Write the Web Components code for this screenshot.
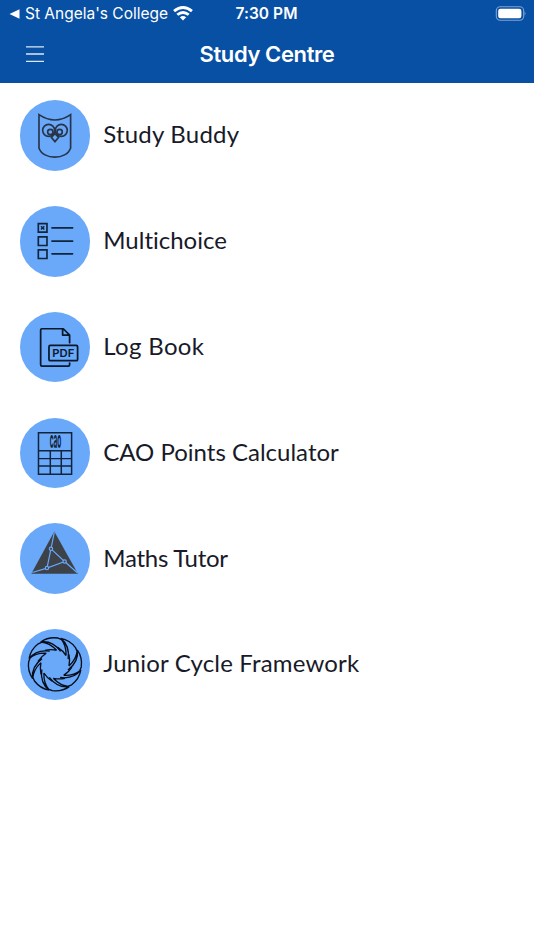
<!DOCTYPE html>
<html lang="en">
<head>
<meta charset="utf-8">
<title>Study Centre</title>
<style>
body{margin:0;background:#fff;font-family:Inter,"Liberation Sans",sans-serif}
</style>
</head>
<body>
<study-app></study-app>
<script>
const define=(name,html,ready)=>customElements.define(name,class extends HTMLElement{
  connectedCallback(){
    if(this.shadowRoot)return;
    const t=document.createElement('template');
    t.innerHTML=html;
    this.attachShadow({mode:'open'}).append(t.content.cloneNode(true));
    if(ready)ready(this,this.shadowRoot);
  }
});

const owl=`<g stroke="#28344a" stroke-width="5"><path d="M72 60Q120 92 167 60V160C155 197 84 197 72 160Z"/><circle cx="101" cy="107" r="18"/><circle cx="139" cy="107" r="18"/><circle cx="106" cy="112" r="8"/><circle cx="134" cy="112" r="8"/><path d="M109 128L120 117L131 128L120 141Z"/></g>`;
const list=`<g stroke="#10243c" stroke-width="5"><path d="M70 68H96V94H70ZM70 108H96V134H70ZM70 147H96V173H70ZM111 81H173M111 121H173M111 159H173" stroke-linecap="round"/><path d="M78 76L88 86M88 76L78 86" stroke-width="4.5"/></g>`;
const pdf=`<g stroke="#07182b" stroke-width="5.2" stroke-linecap="round" stroke-linejoin="round"><path d="M164 107V84L145 65H81Q77 65 77 69V173Q77 177 81 177H160Q164 177 164 173V168M143 67V84H162"/><rect x="102" y="115" width="86" height="46" rx="4"/></g><text x="145" y="150" text-anchor="middle" font-family="Inter" font-weight="600" font-size="32" textLength="66" lengthAdjust="spacingAndGlyphs" fill="#07182b">PDF</text>`;
const cao=`<path d="M70.5 58H170V183H70.5ZM70.5 112H170M70.5 136H170M70.5 158H170M106 112V183M139 112V183" stroke="#10243c" stroke-width="4.5"/><text transform="translate(121.5 104) scale(.5 1)" text-anchor="middle" font-family="Inter" font-weight="700" font-size="70" textLength="70" lengthAdjust="spacingAndGlyphs" fill="#10243c">cao</text>`;
const maths=`<path d="M118 39L189 166H49Z" fill="#3c4248"/><g stroke="#6aa8fa" stroke-width="3.5"><path d="M118 42L108 91L149 129L96 149L108 91M149 129L187 163M96 149L52 162"/><g fill="#3c4248"><circle cx="108" cy="91" r="5"/><circle cx="149" cy="129" r="5"/><circle cx="96" cy="149" r="5"/></g></g>`;
const blade=`<path d="M77 52Q100 36 128 40L138 44M77 52Q104 54 125 77M77 52Q112 47 137 80M125 77Q108 73 90 77"/>`;
const shutter=`<g stroke="#050d18" stroke-width="4" stroke-linejoin="round">${[0,45,90,135,180,225,270,315].map(a=>`<g transform="rotate(${a} 120 119)">${blade}</g>`).join('')}</g>`;
const glyphs={owl:[16,owl],list:[15.3,list],pdf:[14.7,pdf],cao:[14,cao],maths:[13.5,maths],shutter:[13,shutter]};

define('round-icon',`<style>:host{display:block;width:70.6px;height:70.6px;border-radius:50%;background:#6aa8fa;flex:none}svg{display:block;width:100%;height:100%}</style><div></div>`,(h,r)=>{
  const [y,g]=glyphs[h.getAttribute('name')];
  r.querySelector('div').innerHTML=`<svg viewBox="15 ${y} 212 212" fill="none">${g}</svg>`;
});

/* Spreads a label's letters so that it fills the given width. */
define('fit-text',`<style>:host{display:inline-block;white-space:nowrap}</style><span><slot></slot></span>`,(h,r)=>{
  const s=r.querySelector('span'),n=h.textContent.length;
  const d=(+h.getAttribute('width')-s.getBoundingClientRect().width)/n;
  s.style.letterSpacing=d+'px';
});

define('status-bar',`<style>
:host{display:grid;grid-template-columns:1fr auto 1fr;align-items:center;height:28px;padding:0 8px 0 9px;color:#fff;font-size:15.5px;line-height:28px}
.l{display:flex;align-items:center}.l fit-text{margin:0 5px 0 5px}.t{font-weight:600;margin-right:2px}.r{justify-self:end;display:flex}svg{display:block}.wifi{margin-top:-2px}
</style>
<div class="l"><svg width="11" height="10" viewBox="0 0 11 10"><path d="M0.5 5L10.5 .3V9.7Z" fill="#fff"/></svg><fit-text width="143">St Angela's College</fit-text>
<svg class="wifi" width="20" height="15" viewBox="0 0 19 15" preserveAspectRatio="none" fill="none" stroke="#fff" stroke-width="2.7"><path d="M1 5.1Q9.5-2.1 18 5.1M4.1 8.8Q9.5 4.2 14.9 8.8"/><path d="M6.5 11.2Q9.5 8.8 12.5 11.2L9.5 14.6Z" fill="#fff" stroke="none"/></svg></div>
<fit-text class="t" width="62">7:30 PM</fit-text>
<div class="r"><svg width="31" height="16" viewBox="0 0 31 16"><rect x="1.3" y=".8" width="27.4" height="13.4" rx="4" fill="none" stroke="#7fa3d0" stroke-width="1.1"/><rect x="3.2" y="2.7" width="23.2" height="9.6" rx="2.2" fill="#fff"/><path d="M29.6 5.2Q31.4 7.5 29.6 9.7Z" fill="#7fa3d0"/></svg></div>`);

define('title-bar',`<style>
:host{display:grid;grid-template-columns:1fr auto 1fr;align-items:center;height:52px;padding:0 26px;box-sizing:border-box;color:#fff;font-size:22px;font-weight:600;line-height:52px}
svg{display:block}
</style><svg width="18" height="18" viewBox="0 0 18 18" stroke="#dce7f3" stroke-width="1.3"><path d="M0 1.8H18M0 9H18M0 16.3H18"/></svg><fit-text width="135">Study Centre</fit-text><span></span>`);

define('menu-row',`<style>
:host{display:block;color:#181a29;font:400 24px/34px Lato,"Open Sans",sans-serif}
div{display:flex;align-items:center;gap:13px;height:70.6px}
fit-text{margin-top:-2.4px}
</style><div></div>`,(h,r)=>{
  r.querySelector('div').innerHTML=`<round-icon name="${h.getAttribute('icon')}"></round-icon><fit-text width="${h.getAttribute('width')}">${h.getAttribute('label')}</fit-text>`;
});

define('study-app',`<style>
:host{display:block;min-height:950px;background:#fff}
header{display:block;background:#0850a3;height:83px}
main{display:flex;flex-direction:column;gap:35.2px;padding:17.3px 19.7px 0}
</style>
<header><status-bar></status-bar><title-bar></title-bar></header>
<main>
<menu-row icon="owl" label="Study Buddy" width="136"></menu-row>
<menu-row icon="list" label="Multichoice" width="124"></menu-row>
<menu-row icon="pdf" label="Log Book" width="101"></menu-row>
<menu-row icon="cao" label="CAO Points Calculator" width="235.5"></menu-row>
<menu-row icon="maths" label="Maths Tutor" width="124.5"></menu-row>
<menu-row icon="shutter" label="Junior Cycle Framework" width="256"></menu-row>
</main>`);
</script>
</body>
</html>
